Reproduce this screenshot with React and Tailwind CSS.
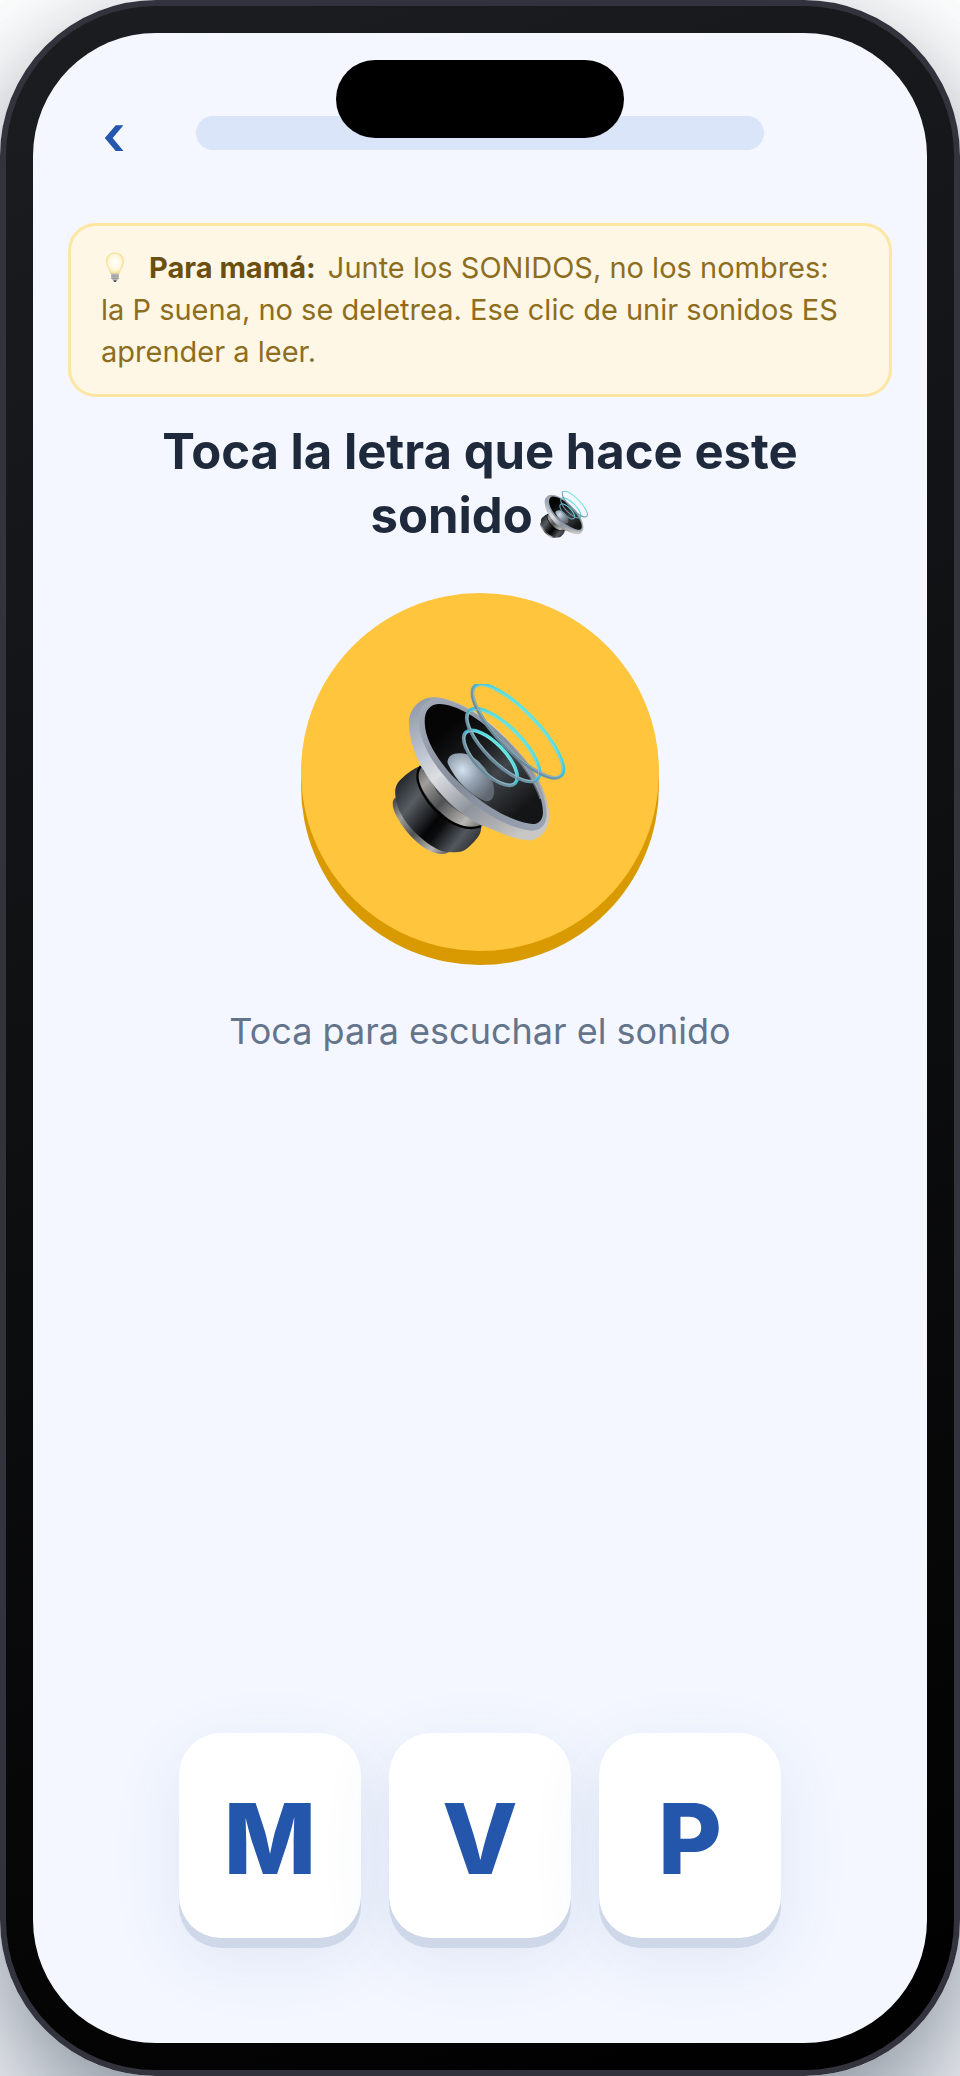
import React from 'react'
import { useState } from 'react'

const letters = ['M', 'V', 'P']

function Speaker({ id, className }) {
  return (
    <svg className={className} viewBox="66 68 530 530" aria-hidden="true">
      <defs>
        <linearGradient id={id + 'rim'} x1="0" y1="0" x2="0.75" y2="1">
          <stop offset="0" stopColor="#8b93a3" />
          <stop offset="0.25" stopColor="#b4bcc9" />
          <stop offset="0.45" stopColor="#dcdee2" />
          <stop offset="0.7" stopColor="#8f949c" />
          <stop offset="1" stopColor="#c9c7c4" />
        </linearGradient>
        <linearGradient id={id + 'face'} x1="0" y1="0" x2="1" y2="1">
          <stop offset="0" stopColor="#a3abba" />
          <stop offset="0.5" stopColor="#858d9b" />
          <stop offset="1" stopColor="#9aa4b5" />
        </linearGradient>
        <linearGradient id={id + 'cone'} x1="0.2" y1="0.2" x2="0.8" y2="0.9">
          <stop offset="0" stopColor="#050506" />
          <stop offset="0.35" stopColor="#1b1d1f" />
          <stop offset="0.6" stopColor="#41464b" />
          <stop offset="1" stopColor="#141516" />
        </linearGradient>
        <radialGradient id={id + 'dome'} cx="0.32" cy="0.35" r="0.75">
          <stop offset="0" stopColor="#d3e2ee" />
          <stop offset="0.45" stopColor="#94a2b1" />
          <stop offset="1" stopColor="#606770" />
        </radialGradient>
        <linearGradient id={id + 'magnet'} x1="0" y1="0.1" x2="1" y2="0.9">
          <stop offset="0" stopColor="#15171a" />
          <stop offset="0.28" stopColor="#575d63" />
          <stop offset="0.55" stopColor="#050506" />
          <stop offset="0.62" stopColor="#0a0b0c" />
          <stop offset="0.82" stopColor="#53585e" />
          <stop offset="1" stopColor="#25282b" />
        </linearGradient>
        <linearGradient id={id + 'neck'} x1="0" y1="0" x2="1" y2="1">
          <stop offset="0" stopColor="#3a3a3b" />
          <stop offset="0.25" stopColor="#a09f9d" />
          <stop offset="0.5" stopColor="#4f5051" />
          <stop offset="0.8" stopColor="#b9b7b4" />
          <stop offset="1" stopColor="#555" />
        </linearGradient>
        <linearGradient id={id + 'basket'} x1="0" y1="0" x2="1" y2="1">
          <stop offset="0" stopColor="#1a1b1c" />
          <stop offset="0.35" stopColor="#3d3f40" />
          <stop offset="0.6" stopColor="#565757" />
          <stop offset="0.8" stopColor="#858585" />
          <stop offset="1" stopColor="#4a4a4a" />
        </linearGradient>
        {/* runs across the short side of each ring */}
        <linearGradient id={id + 'wave'} x1="0" y1="1" x2="0" y2="0">
          <stop offset="0" stopColor="#6a8798" />
          <stop offset="0.4" stopColor="#6f9bab" />
          <stop offset="0.55" stopColor="#3dbbd4" />
          <stop offset="1" stopColor="#5fe3dd" />
        </linearGradient>
      </defs>
      {/* back plate and magnet */}
      <path d="M78 408C64 414 67 436 74 452C100 510 160 572 210 577C220 578 230 575 238 570L200 500Z" fill={`url(#${id}neck)`} />
      <path d="M76 400C74 378 80 366 92 354C110 336 130 322 152 313L333 492C334 514 326 526 312 540C298 554 284 570 264 571C238 574 214 572 190 556C134 520 80 462 76 400Z" fill={`url(#${id}magnet)`} />
      {/* neck and basket */}
      <path d="M150 280L155 314C136 330 140 360 162 392C200 454 270 512 326 492L352 494L300 400Z" fill={`url(#${id}neck)`} />
      <path d="M152 314C134 336 142 366 160 398C196 462 272 516 333 494" fill="none" stroke="#020202" strokeWidth="7" />
      <path d="M150 280L184 316C180 350 190 380 212 404C236 434 270 456 320 478L352 496L310 410L190 270Z" fill={`url(#${id}basket)`} />
      <path d="M150 280L160 328L190 366L196 345L172 300Z" fill="#111213" />
      <path d="M298 469L312 461L338 482Z" fill="#0c0c0c" />
      {/* rim, cone and dome */}
      <path d="M117 190C113 148 148 107 192 108C250 110 330 150 410 232C480 302 538 390 537 468C534 508 506 540 470 536C420 530 385 510 342 494C240 450 122 320 117 190Z" fill={`url(#${id}rim)`} />
      <path d="M146 180C144 140 165 114 200 114C255 114 335 158 407 232C476 302 530 392 529 462C527 500 500 514 462 504C330 474 150 310 146 180Z" fill={`url(#${id}face)`} />
      <path d="M164 185C162 148 180 128 208 128C258 129 330 170 392 234C460 302 520 392 518 454C517 480 500 491 476 486C360 466 168 306 164 185Z" fill={`url(#${id}cone)`} />
      <path d="M232 304C232 280 254 272 284 277C326 284 376 352 372 392C370 410 362 420 346 419C300 400 256 358 232 304Z" fill={`url(#${id}dome)`} />
      <path d="M392 234C450 292 496 360 512 412" fill="none" stroke="#a4aebb" strokeWidth="9" opacity="0.5" />
      {/* sound rings */}
      <g fill="none" stroke={`url(#${id}wave)`} strokeWidth="11">
        <ellipse cx="361" cy="289" rx="106" ry="44" transform="rotate(46 361 289)" />
        <ellipse cx="399" cy="251" rx="144" ry="54" transform="rotate(45 399 251)" />
        <ellipse cx="443" cy="209" rx="186" ry="59" transform="rotate(46 443 209)" />
      </g>
      <g fill="none" stroke="#c8eef2" strokeWidth="2" opacity="0.6">
        <ellipse cx="361" cy="289" rx="103" ry="41" transform="rotate(46 361 289)" />
        <ellipse cx="399" cy="251" rx="141" ry="51" transform="rotate(45 399 251)" />
        <ellipse cx="443" cy="209" rx="183" ry="56" transform="rotate(46 443 209)" />
      </g>
    </svg>
  )
}

function Bulb() {
  return (
    <svg className="inline-block h-8 w-5 align-[-5px] ml-1" viewBox="0 0 20 32" aria-hidden="true">
      <defs>
        <radialGradient id="bulb" cx="0.5" cy="0.45" r="0.6">
          <stop offset="0" stopColor="#ffffff" />
          <stop offset="0.6" stopColor="#fdf8dc" />
          <stop offset="1" stopColor="#f3d777" />
        </radialGradient>
      </defs>
      <path d="M10 2C4.8 2 1.4 5.6 1.4 10.2C1.4 15.2 5 17.8 6 23H14C15 17.8 18.6 15.2 18.6 10.2C18.6 5.6 15.2 2 10 2Z" fill="url(#bulb)" stroke="#f1d98c" strokeWidth="0.8" />
      <path d="M6.2 22.6H13.8V27.6C13 29 12 29.4 10 29.4C8 29.4 7 29 6.2 27.6Z" fill="#b9b9bb" />
      <path d="M6.2 25H13.8M6.4 27.4H13.6" stroke="#8b8b90" strokeWidth="0.8" />
      <path d="M8 29.2H12L10.8 31H9.2Z" fill="#4a4a50" />
    </svg>
  )
}

export default function App() {
  const [selected, setSelected] = useState(null)

  return (
    <div className="min-h-screen flex bg-white overflow-hidden font-['Inter','Liberation_Sans',sans-serif]">
      <div className="relative flex-1 flex rounded-[156px] border-[6px] border-[#33333d] bg-linear-160/srgb from-[#1c1d21] to-black p-[27px] shadow-[0_20px_80px_rgba(0,0,0,0.18),0_90px_180px_rgba(20,45,80,0.42)]">
        <div className="absolute top-[54px] left-1/2 -translate-x-1/2 w-72 h-[78px] rounded-full bg-black"></div>
        <main className="flex-1 flex flex-col rounded-[123px] bg-[#f4f7ff] px-[35px] pt-[52px] pb-[105px]">
          <header className="flex items-center gap-8">
            <button type="button" aria-label="Atrás" className="w-24 h-24 pt-1 pr-1 shrink-0 text-[56px] leading-none font-semibold text-[#2456ab]">‹</button>
            <div role="progressbar" aria-label="Progreso" aria-valuenow={0} aria-valuemin={0} aria-valuemax={100} className="flex-1 h-[34px] rounded-full bg-[#dae5f9]"></div>
            <div className="w-24 shrink-0"></div>
          </header>

          <p className="mt-[42px] rounded-[28px] border-[3px] border-[#fde6a2] bg-[#fff7e6] px-[30px] py-[21px] text-[29px] leading-[42px] text-[#8d6e1e]">
            <Bulb />
            <strong className="ml-6 mr-1 font-bold text-[#6b4f10]">Para mamá:</strong> Junte los SONIDOS, no los nombres: la&nbsp;P suena, no se deletrea. Ese clic de unir sonidos ES aprender a leer.
          </p>

          <h1 className="mt-[23px] px-16 text-center text-[49px] leading-[64px] font-bold text-[#1e293b]">
            Toca la letra que hace este sonido <Speaker id="s" className="inline-block w-[49px] h-[49px] -ml-1 align-[-7px]" />
          </h1>

          <button type="button" aria-label="Escuchar el sonido" className="mt-[45px] self-center flex items-center justify-center size-[358px] rounded-full bg-[#ffc53d] shadow-[0_14px_0_#d89a00]">
            <Speaker id="b" className="w-[177px] h-[177px]" />
          </button>
          <p className="mt-[54px] text-center text-[36px] leading-[52px] text-[#64748b]">Toca para escuchar el sonido</p>

          <div className="mt-auto flex justify-center gap-7">
            {letters.map((letter) => (
              <button
                key={letter}
                type="button"
                aria-pressed={selected === letter}
                onClick={() => setSelected(letter)}
                className="w-[182px] h-[205px] pt-1.5 rounded-[42px] bg-white text-[98px] leading-none font-extrabold text-[#2456ab] shadow-[0_10px_0_#cfd8e8,0_20px_70px_rgba(36,76,151,0.1)]"
              >
                {letter}
              </button>
            ))}
          </div>
        </main>
      </div>
    </div>
  )
}
